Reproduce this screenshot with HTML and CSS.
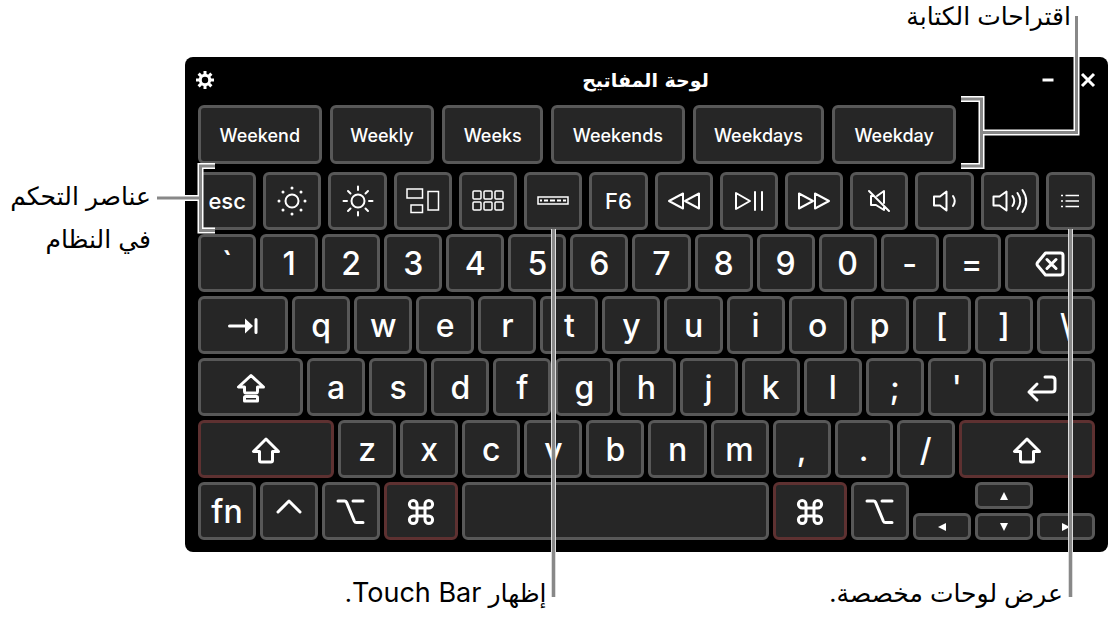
FILE: index.html
```html
<!DOCTYPE html>
<html lang="ar">
<head>
<meta charset="utf-8">
<title>لوحة المفاتيح</title>
<link rel="stylesheet" href="styles.css">
</head>
<body>
<svg class="defs" aria-hidden="true">
  <symbol id="shift" viewBox="0 0 30 28"><path d="M15 3 2.500 15.500H8.500V24.500q0 1.500 1.500 1.500H20q1.500 0 1.500-1.500V15.500H27.500Z"/></symbol>
  <symbol id="command" viewBox="0 0 28 28"><path d="M10 10H18V18H10ZM10 10H6.200A3.800 3.800 0 1 1 10 6.200ZM18 10V6.200A3.800 3.800 0 1 1 21.800 10ZM18 18H21.800A3.800 3.800 0 1 1 18 21.800ZM10 18V21.800A3.800 3.800 0 1 1 6.200 18Z"/></symbol>
  <symbol id="option" viewBox="0 0 30 28"><path d="M2 3H8.500Q10 3 10.600 4.400L18.200 22.800Q19 24.500 20.500 24.500H27M17 3H27"/></symbol>
</svg>
<main class="figure">
  <p class="label label-top" dir="rtl">اقتراحات الكتابة</p>
  <div class="middle">
    <p class="label label-side" dir="rtl">عناصر التحكم<br>في النظام</p>
    <section class="keyboard" aria-label="لوحة المفاتيح">
      <header class="titlebar">
        <button class="tool" aria-label="إعدادات"><svg width="20" height="20" viewBox="0 0 20 20"><path d="M10 1V19M1 10H19M3.600 3.600 16.400 16.400M16.400 3.600 3.600 16.400" fill="none" stroke="#fff" stroke-width="3"/><circle cx="10" cy="10" r="4.700" fill="#000" stroke="#fff" stroke-width="3"/></svg></button>
        <h1 class="title" dir="rtl">لوحة المفاتيح</h1>
        <div class="window-tools">
          <button class="tool" aria-label="تصغير"><svg width="14" height="16" viewBox="0 0 14 16"><path d="M1.500 8H12.500" stroke="#fff" stroke-width="3"/></svg></button>
          <button class="tool" aria-label="إغلاق"><svg width="16" height="16" viewBox="0 0 16 16"><path d="M2 2 14 14M14 2 2 14" stroke="#fff" stroke-width="3"/></svg></button>
        </div>
      </header>

      <div class="row suggestions">
        <button class="key w124">Weekend</button>
        <button class="key w105">Weekly</button>
        <button class="key w101">Weeks</button>
        <button class="key w134">Weekends</button>
        <button class="key w132">Weekdays</button>
        <button class="key w124">Weekday</button>
        <svg class="callout callout-suggestions" width="124" height="162" viewBox="0 0 124 162" aria-hidden="true"><path class="edge" d="M3 89H23.500V156H3M23.500 122.500H118.500V47"/><path class="line" d="M3 89H23.500V156H3M23.500 122.500H118.500V6"/></svg>
      </div>

      <div class="row functions">
        <button class="key">esc</button>
        <button class="key" aria-label="خفض الإضاءة"><svg class="icon" width="32" height="32" viewBox="0 0 32 32"><circle cx="16" cy="16" r="6.500"/><path class="dots" d="M16 3V3M16 29V29M3 16V16M29 16V16M7 7V7M25 7V7M7 25V25M25 25V25"/></svg></button>
        <button class="key" aria-label="زيادة الإضاءة"><svg class="icon" width="32" height="32" viewBox="0 0 32 32"><circle cx="16" cy="16" r="6.500"/><path d="M16 1.500V5M16 27V30.500M1.500 16H5M27 16H30.500M6 6 8.500 8.500M23.500 23.500 26 26M26 6 23.500 8.500M8.500 23.500 6 26"/></svg></button>
        <button class="key" aria-label="Mission Control"><svg class="icon thin" width="34" height="26" viewBox="0 0 34 26"><path d="M1 1H16.500V10H1ZM5 17H16.500V24.500H5ZM22 3.500H32.500V22H22Z"/></svg></button>
        <button class="key" aria-label="Launchpad"><svg class="icon thin" width="32" height="22" viewBox="0 0 32 22"><rect x="1" y="1" width="8" height="8" rx="1"/><rect x="12" y="1" width="8" height="8" rx="1"/><rect x="23" y="1" width="8" height="8" rx="1"/><rect x="1" y="12" width="8" height="8" rx="1"/><rect x="12" y="12" width="8" height="8" rx="1"/><rect x="23" y="12" width="8" height="8" rx="1"/></svg></button>
        <button class="key" aria-label="Touch Bar"><svg class="icon thin" width="32" height="10" viewBox="0 0 32 10"><path d="M1 1H31V8H1Z"/><path class="dash" d="M3 4.500H5M7 4.500H11M13 4.500H18M20 4.500H24M26 4.500H29"/></svg><span class="leader"></span></button>
        <button class="key">F6</button>
        <button class="key" aria-label="السابق"><svg class="icon" width="34" height="20" viewBox="0 0 34 20"><path d="M16 2.500V17.500L2 10ZM32 2.500V17.500L18 10Z"/></svg></button>
        <button class="key" aria-label="تشغيل"><svg class="icon" width="30" height="20" viewBox="0 0 30 20"><path d="M2 2V18L16 10ZM21 1V19M28 1V19"/></svg></button>
        <button class="key" aria-label="التالي"><svg class="icon" width="34" height="20" viewBox="0 0 34 20"><path d="M2 2.500V17.500L16 10ZM18 2.500V17.500L32 10Z"/></svg></button>
        <button class="key" aria-label="كتم الصوت"><svg class="icon" width="24" height="24" viewBox="0 0 24 24"><path d="M10 7 17 2V14M17 18V21L9 16H4V7H7M2 2 22 22"/></svg></button>
        <button class="key" aria-label="خفض الصوت"><svg class="icon" width="26" height="22" viewBox="0 0 26 22"><path d="M2 6.500H8L14.500 1.500V20.500L8 15.500H2ZM21 6Q24.500 11 21 16"/></svg></button>
        <button class="key" aria-label="رفع الصوت"><svg class="icon" width="36" height="26" viewBox="0 0 36 26"><path d="M1.500 8.500H7.500L14.500 3.500V22.500L7.500 17.500H1.500ZM20.500 8Q24 13 20.500 18M25.500 5Q31 13 25.500 21M30.500 2Q38 13 30.500 24"/></svg></button>
        <button class="key w49" aria-label="لوحات مخصصة"><svg class="icon thin" width="20" height="16" viewBox="0 0 20 16"><path d="M1 2.500H3M5.500 2.500H19M1 8H3M5.500 8H19M1 13.500H3M5.500 13.500H19"/></svg><span class="leader"></span></button>
        <svg class="callout callout-controls" width="64" height="76" viewBox="0 0 64 76" aria-hidden="true"><path class="edge" d="M61 6H46.500V70.500H61M46.500 38H30"/><path class="line" d="M61 6H46.500V70.500H61M46.500 38H3"/></svg>
      </div>

      <div class="row">
        <button class="key">`</button><button class="key">1</button><button class="key">2</button><button class="key">3</button><button class="key">4</button><button class="key">5</button><button class="key">6</button><button class="key">7</button><button class="key">8</button><button class="key">9</button><button class="key">0</button><button class="key">-</button><button class="key">=</button>
        <button class="key w90" aria-label="مسح"><svg class="icon bold" width="30" height="26" viewBox="0 0 30 26"><path d="M10.500 2H25.500Q28 2 28 4.500V21.500Q28 24 25.500 24H10.500L2.600 14.500Q1.500 13 2.600 11.500ZM12 8.500 21 17.500M21 8.500 12 17.500"/></svg></button>
      </div>

      <div class="row">
        <button class="key w90" aria-label="جدولة"><svg class="icon bold" width="30" height="18" viewBox="0 0 30 18"><path d="M1.500 9H18M28 2.500V15.500"/><path class="solid" d="M17 1.500 25 9 17 16.500Z"/></svg></button>
        <button class="key">q</button><button class="key">w</button><button class="key">e</button><button class="key">r</button><button class="key">t</button><button class="key">y</button><button class="key">u</button><button class="key">i</button><button class="key">o</button><button class="key">p</button><button class="key">[</button><button class="key">]</button><button class="key">\</button>
      </div>

      <div class="row">
        <button class="key w105" aria-label="أحرف كبيرة"><svg class="icon bold" width="30" height="30" viewBox="0 0 30 30"><path d="M15 2.500 2.500 14H8.500V18Q8.500 20 10 20H20Q21.500 20 21.500 18V14H27.500ZM9.500 23.500H20.500Q21.500 23.500 21.500 24.500V28H8.500V24.500Q8.500 23.500 9.500 23.500Z"/></svg></button>
        <button class="key">a</button><button class="key">s</button><button class="key">d</button><button class="key">f</button><button class="key">g</button><button class="key">h</button><button class="key">j</button><button class="key">k</button><button class="key">l</button><button class="key">;</button><button class="key">'</button>
        <button class="key w105" aria-label="إدخال"><svg class="icon bold" width="30" height="26" viewBox="0 0 30 26"><path d="M18 2H25Q28 2 28 5V14Q28 17 25 17H2M10 9 2 17 10 25"/></svg></button>
      </div>

      <div class="row">
        <button class="key w136 held" aria-label="Shift"><svg class="icon bold" width="30" height="28"><use href="#shift"/></svg></button>
        <button class="key">z</button><button class="key">x</button><button class="key">c</button><button class="key">v</button><button class="key">b</button><button class="key">n</button><button class="key">m</button><button class="key">,</button><button class="key">.</button><button class="key">/</button>
        <button class="key w136 held" aria-label="Shift"><svg class="icon bold" width="30" height="28"><use href="#shift"/></svg></button>
      </div>

      <div class="row">
        <button class="key">fn</button>
        <button class="key" aria-label="Control"><svg class="icon bold" width="26" height="28" viewBox="0 0 26 28"><path d="M2 14 13 3 24 14"/></svg></button>
        <button class="key" aria-label="Option"><svg class="icon bold" width="30" height="28"><use href="#option"/></svg></button>
        <button class="key w74 held" aria-label="Command"><svg class="icon bold" width="28" height="28"><use href="#command"/></svg></button>
        <button class="key w307" aria-label="مسافة"></button>
        <button class="key w74 held" aria-label="Command"><svg class="icon bold" width="28" height="28"><use href="#command"/></svg></button>
        <button class="key" aria-label="Option"><svg class="icon bold" width="30" height="28"><use href="#option"/></svg></button>
        <div class="arrows">
          <button class="key arrow up" aria-label="أعلى"><svg width="10" height="10" viewBox="0 0 10 10"><path d="M5 1 9 9H1Z" fill="#fff"/></svg></button>
          <button class="key arrow" aria-label="يسار"><svg width="10" height="10" viewBox="0 0 10 10"><path d="M1 5 9 1V9Z" fill="#fff"/></svg></button>
          <button class="key arrow" aria-label="أسفل"><svg width="10" height="10" viewBox="0 0 10 10"><path d="M5 9 9 1H1Z" fill="#fff"/></svg></button>
          <button class="key arrow" aria-label="يمين"><svg width="10" height="10" viewBox="0 0 10 10"><path d="M9 5 1 1V9Z" fill="#fff"/></svg></button>
        </div>
      </div>
    </section>
  </div>
  <div class="bottom">
    <p class="label" dir="rtl">إظهار <bdi class="latin">Touch Bar</bdi>.</p>
    <p class="label" dir="rtl">عرض لوحات مخصصة.</p>
  </div>
</main>
</body>
</html>
```
FILE: styles.css
```css
* { box-sizing: border-box; }
body { margin: 0; background: #fff; color: #000; overflow: hidden; font-family: Inter, "DejaVu Sans", sans-serif; }
.defs { position: absolute; width: 0; height: 0; }

.label { margin: 0; font-family: Inter, "DejaVu Sans", sans-serif; font-weight: 400; font-size: 25px; line-height: 43px; white-space: nowrap; }
.label-top { height: 57px; padding-right: 41px; line-height: 32px; }
.middle { display: grid; grid-template-columns: 185px 1fr; padding-right: 4px; }
.label-side { padding: 118px 34px 0 0; }
.latin { font-size: 27px; line-height: 40px; }
.bottom { display: grid; grid-template-columns: 546fr 516fr; padding: 20px 49px 0 0; }

.keyboard { position: relative; display: flex; flex-direction: column; gap: 4px; padding: 0 13px 12px; background: #000; border-radius: 8px; }
.titlebar { display: grid; grid-template-columns: 1fr auto 1fr; align-items: center; height: 44px; padding-top: 1px; margin: 0 -1px 0 -3px; }
.title { margin: 0; color: #fff; font: bold 19px/28px "DejaVu Sans", sans-serif; }
.tool { display: block; width: max-content; padding: 0; border: 0; background: none; }
.tool svg { display: block; fill: none; }
.window-tools { display: flex; justify-content: flex-end; gap: 25px; }

.row { position: relative; display: flex; gap: 4px; height: 58px; }
.key { --w: 58; position: relative; display: flex; align-items: center; justify-content: center; flex: var(--w) 1 calc(var(--w) * 1px); min-width: 0; padding: 2px 0 0; border: 3px solid #585858; border-radius: 6px; background: #262626; color: #fff; font: 500 32px/40px Inter, sans-serif; }
.held { border-color: #5e3131; }
.w49 { --w: 49; }
.w74 { --w: 74; }
.w90 { --w: 90; }
.w101 { --w: 101; }
.w105 { --w: 105; }
.w124 { --w: 124; }
.w132 { --w: 132; }
.w134 { --w: 134; }
.w136 { --w: 136; }
.w307 { --w: 307; }

.suggestions { gap: 8px; height: 59px; padding-right: 139px; margin-bottom: 4px; }
.suggestions .key { font-size: 18px; }
.functions { gap: 7px; }
.functions .key { padding: 0; font-size: 22px; }

.arrows { display: grid; grid-template-columns: repeat(3, 1fr); grid-template-rows: 1fr 1fr; gap: 4px; flex: 182 1 182px; }
.up { grid-column: 2; }
.arrow { padding: 0; }
.arrow + .arrow { grid-row: 2; }

.icon { display: block; overflow: visible; fill: none; stroke: #fff; stroke-width: 2; stroke-linejoin: round; stroke-linecap: round; }
.thin { stroke-width: 1.5; stroke-linecap: butt; stroke-linejoin: miter; }
.bold { stroke-width: 3; }
.dots { stroke-width: 3; }
.dash { stroke-width: 2; }
.solid { fill: #fff; stroke: none; }

.callout { position: absolute; z-index: 2; fill: none; }
.callout-suggestions { top: -95px; right: 13px; }
.callout-controls { top: -12px; left: -44px; }
.edge { stroke: #fff; stroke-width: 6; }
.line { stroke: #888; stroke-width: 3; }
.leader { position: absolute; z-index: 2; top: 54px; left: 50%; width: 5px; height: 368px; margin-left: -2px; border: solid #ddd; border-width: 0 1px; background: #888; }
```
